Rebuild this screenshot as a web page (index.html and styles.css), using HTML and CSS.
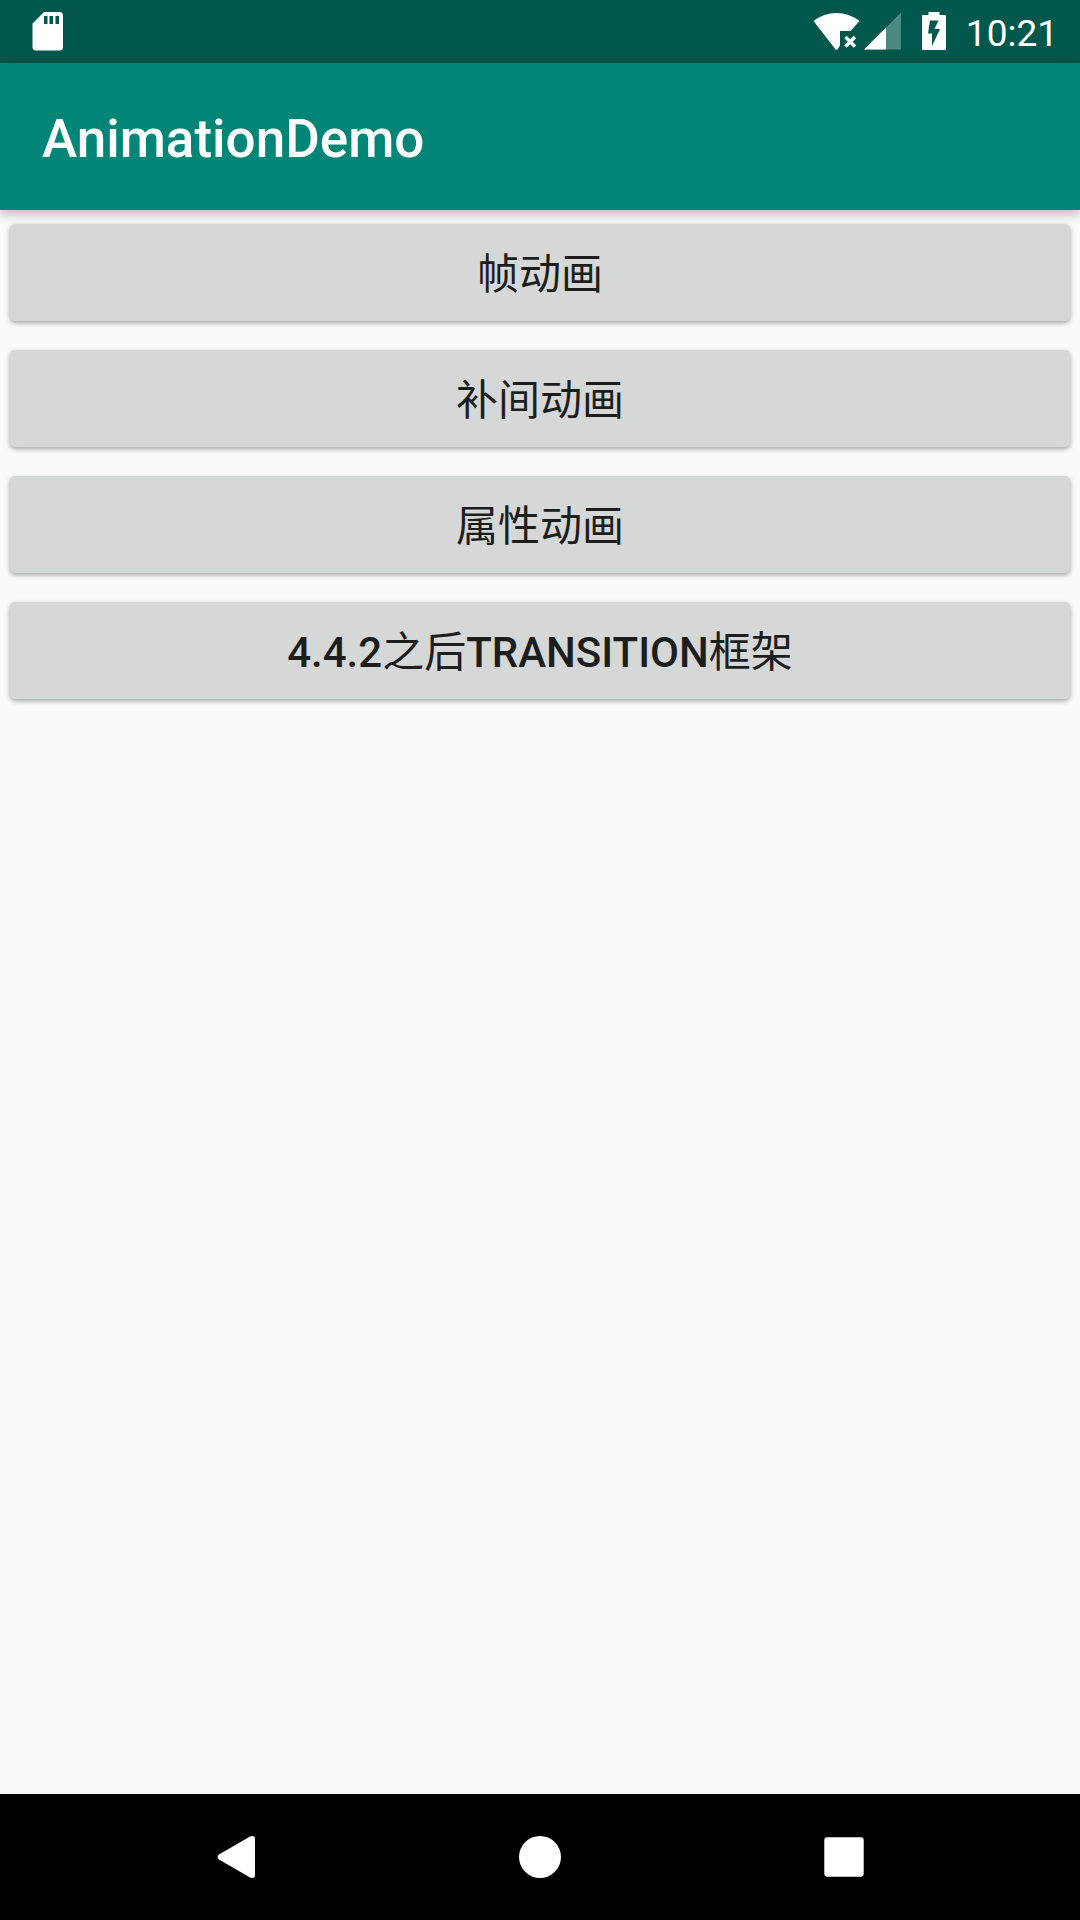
FILE: index.html
```html
<!DOCTYPE html>
<html lang="zh-CN">
<head>
  <meta charset="utf-8">
  <meta name="viewport" content="width=device-width, initial-scale=1">
  <title>AnimationDemo</title>
  <link rel="stylesheet" href="styles.css">
</head>
<body>
  <div class="screen">
    <div class="status-bar">
      <svg class="status-icon sd-card" width="32" height="40" viewBox="0 0 32 40" aria-label="SD card" role="img">
        <path fill="#fff" fill-rule="evenodd" d="M12 0H27.500Q31 0 31 3.500V35Q31 38.500 27.500 38.500H4Q0.500 38.500 0.500 35V11.500ZM12 4V12H15.500V4ZM17.500 4V12H21V4ZM23.500 4V12H27V4Z"/>
      </svg>
      <div class="status-group">
        <svg class="status-icon" width="48" height="40" viewBox="0 0 48 40" aria-label="Wi-Fi" role="img">
          <path fill="#fff" d="M0.500 9Q11 1 23.500 1T46.500 9L37.500 19H27V33.500L24 38H23Z"/>
          <path fill="none" stroke="#fff" stroke-width="3.400" d="M32.500 25L42 34.500M42 25L32.500 34.500"/>
        </svg>
        <svg class="status-icon" width="37" height="40" viewBox="0 0 37 40" aria-label="Signal" role="img">
          <path fill="#fff" fill-opacity=".3" d="M37 0.500V37.500H0Z"/>
          <path fill="#fff" d="M22 15.500V37.500H0Z"/>
        </svg>
        <svg class="status-icon battery" width="24" height="40" viewBox="0 0 24 40" aria-label="Charging" role="img">
          <path fill="#fff" fill-rule="evenodd" d="M6.500 0H17.500V3H24V38H0V3H6.500ZM8 8.500L6 21.500H10V34L18 17H12.500L16.500 8.500Z"/>
        </svg>
        <span class="clock">10:21</span>
      </div>
    </div>
    <header class="app-bar">
      <h1 class="app-title">AnimationDemo</h1>
    </header>
    <main class="content">
      <button class="demo-button" type="button">帧动画</button>
      <button class="demo-button" type="button">补间动画</button>
      <button class="demo-button" type="button">属性动画</button>
      <button class="demo-button" type="button"><b class="latin">4.4.2</b>之后<b class="latin">TRANSITION</b>框架</button>
    </main>
    <nav class="nav-bar">
      <button class="nav-button" type="button" aria-label="Back">
        <svg width="42" height="42" viewBox="0 0 42 42"><path fill="#fff" d="M4 18.500L35 0.500Q40 -1 40 3V39Q40 43 35 41.500L4 23.500Q1 21 4 18.500Z"/></svg>
      </button>
      <button class="nav-button" type="button" aria-label="Home">
        <svg width="42" height="42" viewBox="0 0 42 42"><circle fill="#fff" cx="21" cy="21" r="21"/></svg>
      </button>
      <button class="nav-button" type="button" aria-label="Overview">
        <svg width="42" height="42" viewBox="0 0 42 42"><rect fill="#fff" x="1.300" y="1.300" width="39.400" height="39.400" rx="3"/></svg>
      </button>
    </nav>
  </div>
</body>
</html>
```

FILE: styles.css
```css
* {
  box-sizing: border-box;
}

body {
  margin: 0;
  background: #fafafa;
  font-family: Roboto, "Noto Sans CJK SC", sans-serif;
}

.screen {
  display: flex;
  flex-direction: column;
  min-height: 100vh;
}

.status-bar {
  display: flex;
  justify-content: space-between;
  align-items: center;
  height: 63px;
  padding: 0 22px 0 32px;
  background: #00574b;
  color: #fff;
}

.status-group {
  display: flex;
  align-items: center;
}

.status-icon {
  display: block;
}

.status-icon + .status-icon {
  margin-left: 3px;
}

.status-icon + .battery {
  margin-left: 21px;
}

.clock {
  padding-top: 4px;
  margin-left: 20px;
  font-size: 37px;
  line-height: 59px;
}

.app-bar {
  display: flex;
  align-items: center;
  height: 147px;
  padding: 6px 42px 0;
  background: #008577;
  color: #fff;
  box-shadow: 0 3px 12px rgba(0, 0, 0, 0.3);
}

.app-title {
  margin: 0;
  font-size: 53px;
  font-weight: 500;
  line-height: 63px;
}

.content {
  display: flex;
  flex: 1;
  flex-direction: column;
  gap: 29px;
  padding: 14px 10px;
}

.demo-button {
  height: 97px;
  padding: 4px 20px 0;
  border: 0;
  border-radius: 5px;
  background: #d6d8d7;
  box-shadow: 0 2px 5px rgba(0, 0, 0, 0.35);
  color: #1c1d1d;
  font-family: inherit;
  font-size: 42px;
  font-weight: 400;
  line-height: 63px;
}

.latin {
  font-weight: 500;
}

.nav-bar {
  display: flex;
  height: 126px;
  padding: 0 84px;
  background: #000;
}

.nav-button {
  display: flex;
  flex: 1;
  justify-content: center;
  align-items: center;
  padding: 0;
  border: 0;
  background: none;
}
```
